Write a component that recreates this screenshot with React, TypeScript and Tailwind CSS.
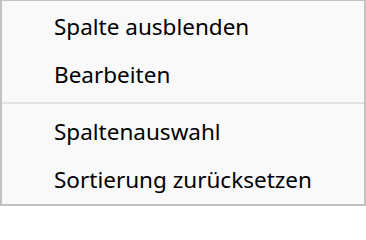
import React from "react";

export default function App() {
  const item =
    "h-12 flex items-center pl-[52px] text-[22.5px] leading-[48px] text-black";
  return (
    <div
      className="w-[366px] h-[206px] bg-[#f9f9f9] border-[#c2c2c2] border-t border-l-2 border-r-2 border-b-2 flex flex-col"
      style={{ fontFamily: '"Noto Sans", "Open Sans", sans-serif' }}
    >
      <div className="pt-[2px] flex flex-col">
        <div className={item}>Spalte ausblenden</div>
        <div className={item}>Bearbeiten</div>
      </div>
      <div className="mt-[3px] h-[2px] bg-[#e2e2e2]" />
      <div className="mt-[4px] flex flex-col">
        <div className={item}>Spaltenauswahl</div>
        <div className={item}>Sortierung zurücksetzen</div>
      </div>
    </div>
  );
}
